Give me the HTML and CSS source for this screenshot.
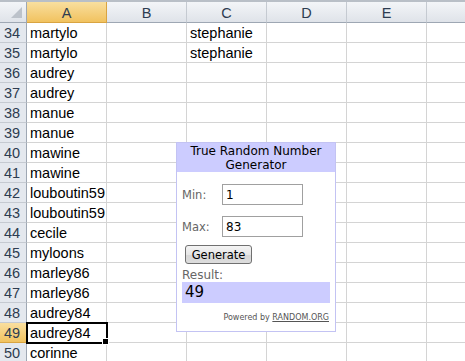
FILE: index.html
```html
<!DOCTYPE html>
<html lang="en">

<head>
    <meta charset="UTF-8">
    <meta name="viewport" content="width=device-width, initial-scale=1.0">
    <title>Sheet with random number widget</title>
    <link rel="stylesheet" href="styles.css">
</head>

<body>
    <div class="sheet">
        <table class="grid">
            <thead>
                <tr>
                    <th class="corner"><span class="corner-tri"></span></th>
                    <th class="col-head sel">A</th>
                    <th class="col-head">B</th>
                    <th class="col-head">C</th>
                    <th class="col-head">D</th>
                    <th class="col-head">E</th>
                    <th class="col-head"></th>
                </tr>
            </thead>
            <tbody>
                <tr><th>34</th><td>martylo</td><td></td><td>stephanie</td><td></td><td></td><td></td></tr>
                <tr><th>35</th><td>martylo</td><td></td><td>stephanie</td><td></td><td></td><td></td></tr>
                <tr><th>36</th><td>audrey</td><td></td><td></td><td></td><td></td><td></td></tr>
                <tr><th>37</th><td>audrey</td><td></td><td></td><td></td><td></td><td></td></tr>
                <tr><th>38</th><td>manue</td><td></td><td></td><td></td><td></td><td></td></tr>
                <tr><th>39</th><td>manue</td><td></td><td></td><td></td><td></td><td></td></tr>
                <tr><th>40</th><td>mawine</td><td></td><td></td><td></td><td></td><td></td></tr>
                <tr><th>41</th><td>mawine</td><td></td><td></td><td></td><td></td><td></td></tr>
                <tr><th>42</th><td>louboutin59</td><td></td><td></td><td></td><td></td><td></td></tr>
                <tr><th>43</th><td>louboutin59</td><td></td><td></td><td></td><td></td><td></td></tr>
                <tr><th>44</th><td>cecile</td><td></td><td></td><td></td><td></td><td></td></tr>
                <tr><th>45</th><td>myloons</td><td></td><td></td><td></td><td></td><td></td></tr>
                <tr><th>46</th><td>marley86</td><td></td><td></td><td></td><td></td><td></td></tr>
                <tr><th>47</th><td>marley86</td><td></td><td></td><td></td><td></td><td></td></tr>
                <tr><th>48</th><td>audrey84</td><td></td><td></td><td></td><td></td><td></td></tr>
                <tr><th class="sel">49</th><td class="active">audrey84<span class="handle"></span></td><td></td><td></td><td></td><td></td><td></td></tr>
                <tr><th>50</th><td>corinne</td><td></td><td></td><td></td><td></td><td></td></tr>
            </tbody>
        </table>

        <div class="rng">
            <div class="rng-title">True Random Number<br>Generator</div>
            <div class="rng-body">
                <div class="rng-row">
                    <label for="min">Min:</label>
                    <input type="text" id="min" value="1">
                </div>
                <div class="rng-row rng-row-max">
                    <label for="max">Max:</label>
                    <input type="text" id="max" value="83">
                </div>
                <button type="button" class="gen-btn">Generate</button>
                <div class="result-label">Result:</div>
                <div class="result-box">49</div>
                <div class="powered">Powered by <u>RANDOM.ORG</u></div>
            </div>
        </div>
    </div>
</body>

</html>
```

FILE: styles.css
```css
* {
    margin: 0;
    padding: 0;
    box-sizing: border-box;
}

body {
    background: #fff;
    overflow: hidden;
    font-family: 'Liberation Sans', Arial, sans-serif;
}

.sheet {
    position: relative;
    border-top: 2px solid #b9bfc7;
    width: 465px;
    height: 361px;
    overflow: hidden;
}

.grid {
    table-layout: fixed;
    border-collapse: separate;
    border-spacing: 0;
    width: 507px;
    font-size: 14.5px;
}

.grid th,
.grid td {
    height: 20px;
    border-right: 1px solid #d4d4d4;
    border-bottom: 1px solid #d4d4d4;
    padding: 0 3px;
    vertical-align: bottom;
    line-height: 18px;
    white-space: nowrap;
    overflow: visible;
    text-align: left;
    font-weight: normal;
    color: #000;
}

.grid thead th {
    height: 21px;
    width: 80px;
    text-align: center;
    color: #2d3c50;
    background: linear-gradient(#f3f5f8, #dfe3e9);
    border-right: 1px solid #c5cad1;
    border-bottom: 1px solid #9ea7b3;
}

.grid thead th.corner {
    width: 27px;
    position: relative;
    border-right: 1px solid #9ea7b3;
}

.corner-tri {
    position: absolute;
    right: 4px;
    bottom: 4px;
    width: 0;
    height: 0;
    border-left: 11px solid transparent;
    border-bottom: 11px solid #bcc2ca;
}

.grid tbody th {
    width: 27px;
    padding: 0 2px 0 0;
    text-align: center;
    color: #2d3c50;
    background: #e4e8ee;
    border-right: 1px solid #9ea7b3;
    border-bottom: 1px solid #c5cad1;
}

.grid th.sel,
.grid thead th.sel {
    background: linear-gradient(#f9df9f, #f1c25f);
    border-bottom-color: #d9a441;
    border-right-color: #d9a441;
}

.grid td.active {
    position: relative;
    outline: 2px solid #000;
    outline-offset: -1px;
}

.handle {
    position: absolute;
    right: -3px;
    bottom: -3px;
    width: 5px;
    height: 5px;
    background: #000;
    border: 1px solid #fff;
    box-sizing: content-box;
}

/* random number widget */
.rng {
    position: absolute;
    left: 176px;
    top: 140px;
    width: 160px;
    height: 190px;
    border: 1px solid #c3c3f3;
    background: #fff;
    font-family: 'DejaVu Sans', Verdana, sans-serif;
    font-size: 12px;
    color: #000;
}

.rng-title {
    background: #ccccff;
    text-align: center;
    line-height: 14px;
    padding: 1px 0;
    height: 29px;
}

.rng-body {
    padding: 0 5px;
}

.rng-row {
    display: flex;
    align-items: center;
    margin-top: 12px;
}

.rng-row-max {
    margin-top: 11px;
}

.rng-row label {
    width: 40px;
    color: #666;
    font-size: 11.5px;
}

.rng-row input {
    width: 81px;
    height: 21px;
    border: 1px solid #a0a0a0;
    padding: 0 3px;
    font-family: 'DejaVu Sans', Verdana, sans-serif;
    font-size: 12px;
    color: #000;
}

.gen-btn {
    display: block;
    margin: 8px 0 0 3px;
    width: 67px;
    height: 19px;
    border: 1px solid #707070;
    border-radius: 3px;
    background: linear-gradient(#f4f4f4 0%, #e6e6e6 50%, #d6d6d6 51%, #dddddd 100%);
    font-family: 'DejaVu Sans', Verdana, sans-serif;
    font-size: 11.5px;
    color: #000;
}

.result-label {
    margin-top: 4px;
    color: #666;
    line-height: 14px;
}

.result-box {
    background: #ccccff;
    height: 21px;
    line-height: 21px;
    padding-left: 3px;
    font-size: 15px;
}

.powered {
    margin-top: 10px;
    text-align: right;
    font-size: 8px;
    color: #555;
    padding-right: 1px;
}
```
